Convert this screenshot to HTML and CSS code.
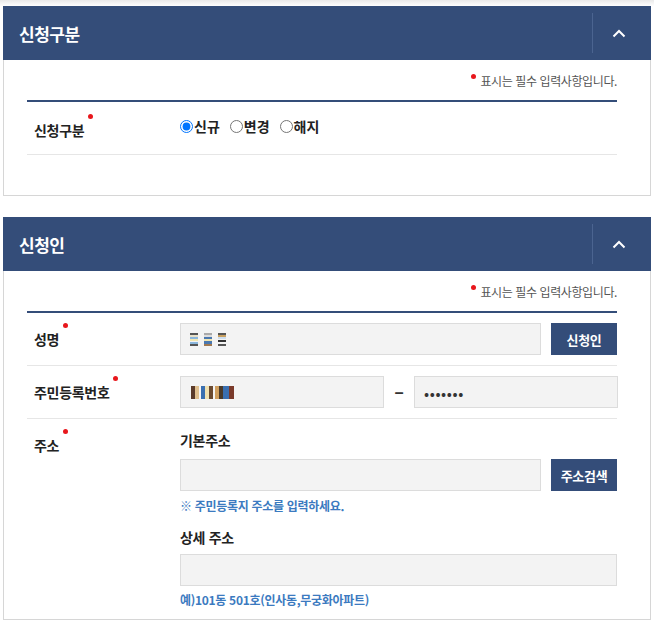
FILE: index.html
```html
<!DOCTYPE html>
<html lang="ko">
<head>
<meta charset="utf-8">
<link rel="stylesheet" href="styles.css">
</head>
<body>
<div class="page">
  <section class="panel">
    <header class="panel-head">
      <h2 class="panel-title">신청구분</h2>
      <button class="toggle" type="button" aria-label="접기">
        <svg width="14" height="9" viewBox="0 0 14 9"><path d="M1.5 7.5 L7 2 L12.5 7.5" fill="none" stroke="#fff" stroke-width="2"/></svg>
      </button>
    </header>
    <div class="panel-body body-short">
      <p class="req-note"><span class="dot note-dot"></span>표시는 필수 입력사항입니다.</p>
      <div class="form">
        <div class="row row-type">
          <div class="label"><span class="lbl">신청구분<span class="dot"></span></span></div>
          <div class="field radios">
            <label class="radio"><input type="radio" name="t" checked>신규</label>
            <label class="radio"><input type="radio" name="t">변경</label>
            <label class="radio"><input type="radio" name="t">해지</label>
          </div>
        </div>
      </div>
    </div>
  </section>

  <section class="panel panel2">
    <header class="panel-head">
      <h2 class="panel-title">신청인</h2>
      <button class="toggle" type="button" aria-label="접기">
        <svg width="14" height="9" viewBox="0 0 14 9"><path d="M1.5 7.5 L7 2 L12.5 7.5" fill="none" stroke="#fff" stroke-width="2"/></svg>
      </button>
    </header>
    <div class="panel-body">
      <p class="req-note"><span class="dot note-dot"></span>표시는 필수 입력사항입니다.</p>
      <div class="form">
        <div class="row">
          <div class="label"><span class="lbl">성명<span class="dot"></span></span></div>
          <div class="field line">
            <div class="input grow"><span class="mosaic name-mosaic"><i style="background:linear-gradient(#555 0 2px,#e8e0c8 2px 4px,#8ab6dc 4px 6px,#f2e6b0 6px 8px,#f3f3f3 8px 9px,#8ab6dc 9px 11px,#555 11px 13px)"></i><i style="background:linear-gradient(#aaa 0 2px,#ddd 2px 4px,#4a78b0 4px 6px,#f2e6b0 6px 8px,#4a78b0 8px 11px,#a07850 11px 13px)"></i><i style="background:linear-gradient(#555 0 2px,#c8a060 2px 4px,#cde 4px 6px,#f3f3f3 6px 7px,#333 7px 9px,#f3f3f3 9px 11px,#555 11px 13px)"></i></span></div>
            <button class="btn" type="button">신청인</button>
          </div>
        </div>
        <div class="row">
          <div class="label"><span class="lbl">주민등록번호<span class="dot"></span></span></div>
          <div class="field line">
            <div class="input half"><span class="mosaic jumin"></span></div>
            <span class="dash">-</span>
            <div class="input half pw">•••••••</div>
          </div>
        </div>
        <div class="row row-addr">
          <div class="label"><span class="lbl">주소<span class="dot"></span></span></div>
          <div class="field stack">
            <div class="sub-title">기본주소</div>
            <div class="line">
              <div class="input grow"></div>
              <button class="btn" type="button">주소검색</button>
            </div>
            <p class="hint">※ 주민등록지 주소를 입력하세요.</p>
            <div class="sub-title sub2">상세 주소</div>
            <div class="input full"></div>
            <p class="hint hint2">예)101동 501호(인사동,무궁화아파트)</p>
          </div>
        </div>
      </div>
    </div>
  </section>
</div>
</body>
</html>
```

FILE: styles.css
```css
* { box-sizing: border-box; }
html, body { margin: 0; padding: 0; background: #fff; }
body {
  font-family: "Noto Sans CJK KR", "Noto Sans", sans-serif;
  color: #222;
  background: linear-gradient(#e9e9e9 0, #fff 6px) no-repeat;
}
.page { padding: 6px 3px 0 3px; width: 654px; }

.panel2 { margin-top: 21px; }

.panel-head {
  height: 54px;
  background: #344d79;
  display: flex;
  align-items: center;
  justify-content: space-between;
  padding-left: 16px;
}
.panel-title {
  margin: 0;
  color: #fff;
  font-size: 17px;
  font-weight: 700;
  letter-spacing: -0.5px;
}
.toggle {
  width: 59px;
  height: 40px;
  border: 0;
  border-left: 1px solid #4b6490;
  background: transparent;
  display: flex;
  align-items: center;
  justify-content: center;
  padding: 0 6px 0 0;
}

.panel-body {
  border: 1px solid #d6d6d6;
  border-top: 0;
  padding: 10px 33px 0 23px;
}
.body-short { padding-bottom: 40px; }

.req-note {
  margin: 0;
  text-align: right;
  font-size: 12px;
  color: #555;
  letter-spacing: -0.4px;
  line-height: 22px;
  height: 30px;
  position: relative;
}
.dot {
  display: inline-block;
  width: 5px;
  height: 5px;
  border-radius: 50%;
  background: #e8171c;
  position: absolute;
}
.note-dot { position: relative; top: -7px; margin-right: 4px; }

.form {
  border-top: 2px solid #344d79;
}
.row {
  display: flex;
  border-bottom: 1px solid #e6e6e6;
  padding: 10px 0;
  min-height: 53px;
}
.row-type { padding: 12px 0 0; min-height: 53px; }
.row-addr { border-bottom: 0; padding-top: 11px; }

.label {
  width: 153px;
  padding-left: 7px;
  flex-shrink: 0;
  display: flex;
  align-items: center;
}
.row-addr .label { align-items: flex-start; padding-top: 5px; }
.row-type .label { align-items: flex-start; padding-top: 6px; }
.lbl {
  position: relative;
  font-size: 14px;
  font-weight: 700;
  color: #222;
  letter-spacing: -0.3px;
}
.lbl .dot { right: -9px; top: -6px; }

.field { flex: 1; }
.line { display: flex; align-items: center; }
.stack { display: flex; flex-direction: column; }

.radios { display: flex; align-items: center; height: 20px; padding-top: 4px; }
.radio {
  display: flex;
  align-items: center;
  font-size: 14px;
  font-weight: 700;
  color: #222;
  margin-right: 10px;
}
.radio input { margin: 0 1px 0 0; width: 13px; height: 13px; }

.input {
  height: 32px;
  background: #f3f3f3;
  border: 1px solid #dcdcdc;
  display: flex;
  align-items: center;
  padding-left: 8px;
}
.grow { flex: 1; }
.half { width: 204px; }
.full { width: 100%; }
.pw { font-size: 15px; color: #333; letter-spacing: 0.6px; padding-left: 9px; }

.dash {
  width: 30px;
  text-align: center;
  font-size: 18px;
  font-weight: 700;
  color: #333;
  transform: scaleX(1.6);
}

.btn {
  width: 66px;
  height: 32px;
  margin-left: 10px;
  border: 0;
  background: #344d79;
  color: #fff;
  font-family: inherit;
  font-size: 13px;
  font-weight: 700;
  letter-spacing: -0.3px;
  padding: 0;
}

.mosaic { display: flex; gap: 6px; align-items: center; }
.mosaic i { display: block; width: 8px; height: 13px; }
.name-mosaic { padding-left: 1px; }
.jumin {
  width: 43px;
  height: 13px;
  background: linear-gradient(90deg,#5a3a2a 0 4px,#e0c090 4px 8px,#f5f5f5 8px 10px,#3a6fb0 10px 14px,#f0e0b0 14px 18px,#6a4a30 18px 22px,#f5f5f5 22px 24px,#d0a060 24px 28px,#4a3a2a 28px 32px,#3a6fb0 32px 38px,#7a3a2a 38px 43px);
  margin-left: 2px;
}

.sub-title {
  font-size: 14px;
  font-weight: 700;
  color: #222;
  line-height: 20px;
  margin-bottom: 9px;
  letter-spacing: -0.3px;
}
.sub2 { margin-top: 12px; margin-bottom: 7px; }
.hint {
  margin: 6px 0 0;
  font-size: 12px;
  font-weight: 700;
  color: #3b7ac0;
  line-height: 18px;
  letter-spacing: -0.3px;
}
.hint2 { margin-top: 5px; }
```
